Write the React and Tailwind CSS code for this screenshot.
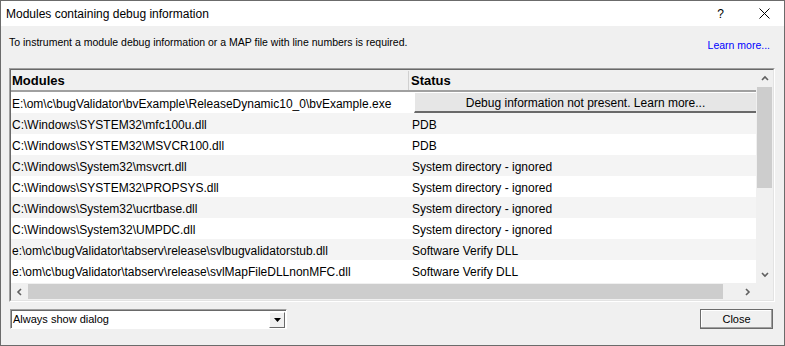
const ROWS = [
  { m: "C:\\Windows\\SYSTEM32\\mfc100u.dll", s: "PDB" },
  { m: "C:\\Windows\\SYSTEM32\\MSVCR100.dll", s: "PDB" },
  { m: "C:\\Windows\\System32\\msvcrt.dll", s: "System directory - ignored" },
  { m: "C:\\Windows\\SYSTEM32\\PROPSYS.dll", s: "System directory - ignored" },
  { m: "C:\\Windows\\System32\\ucrtbase.dll", s: "System directory - ignored" },
  { m: "C:\\Windows\\System32\\UMPDC.dll", s: "System directory - ignored" },
  { m: "e:\\om\\c\\bugValidator\\tabserv\\release\\svlbugvalidatorstub.dll", s: "Software Verify DLL" },
  { m: "e:\\om\\c\\bugValidator\\tabserv\\release\\svlMapFileDLLnonMFC.dll", s: "Software Verify DLL" },
];

const font = { fontFamily: '"Liberation Sans", Arial, sans-serif' };

function Chevron({ dir }) {
  const d = {
    up: "M1 5 L4 2 L7 5",
    down: "M1 2 L4 5 L7 2",
    left: "M5 1 L2 4 L5 7",
    right: "M2 1 L5 4 L2 7",
  }[dir];
  return (
    <svg width="8" height="8" viewBox="0 0 8 8">
      <path d={d} fill="none" stroke="#606060" strokeWidth="1.6" />
    </svg>
  );
}

export default function App() {
  return (
    <div
      className="flex h-[346px] w-[785px] flex-col border border-[#6b6b6b] bg-[#f0f0f0] text-[12px] text-black"
      style={font}
    >
      {/* Title bar */}
      <div className="flex h-[25px] shrink-0 items-center bg-white pl-[5px] pr-[14px]">
        <span className="text-[12px]">Modules containing debug information</span>
        <span className="ml-auto mr-[35px] text-[12px]">?</span>
        <svg width="11" height="11" viewBox="0 0 11 11">
          <path d="M0.5 0.5 L10.5 10.5 M10.5 0.5 L0.5 10.5" stroke="#000" strokeWidth="1" />
        </svg>
      </div>

      {/* Body */}
      <div className="flex flex-1 flex-col px-[8px] pt-[9px]">
        <div className="flex h-[15px] items-center text-[10.5px]">
          <span>To instrument a module debug information or a MAP file with line numbers is required.</span>
          <span className="ml-auto mr-[6px] mt-[6px] text-[#0000ff]">Learn more...</span>
        </div>

        {/* List box */}
        <div className="mt-[18px] mr-[1px] flex h-[234px] flex-col border-l border-t border-r border-b border-l-[#a0a0a0] border-t-[#a0a0a0] border-r-white border-b-white">
          <div className="flex flex-1 flex-col border-l border-t border-r border-b border-l-[#696969] border-t-[#696969] border-r-[#e3e3e3] border-b-[#e3e3e3] bg-white">
            <div className="flex flex-1 overflow-hidden">
              <div className="flex flex-1 flex-col">
                {/* Header */}
                <div className="flex h-[22px] border-b-2 border-[#a0a0a0] bg-[#f0f0f0] pt-[1px] text-[13px] font-bold">
                  <div className="flex w-[398px] items-center border-r border-[#d0d0d0] pl-[1px]">Modules</div>
                  <div className="flex flex-1 items-center pl-[2px]">Status</div>
                </div>
                {/* First row with button */}
                <div className="flex h-[21px] bg-white">
                  <div className="flex w-[403px] items-center pl-[1px] pt-[2px]">
                    E:\om\c\bugValidator\bvExample\ReleaseDynamic10_0\bvExample.exe
                  </div>
                  <div className="flex flex-1 items-center justify-center border-l border-t border-b-2 border-l-white border-t-white border-b-[#696969] bg-[#e6e6e6] pt-[1px]">
                    Debug information not present. Learn more...
                  </div>
                </div>
                {ROWS.map((r, i) => (
                  <div
                    key={r.m}
                    className={"flex h-[21px] items-center pt-[2px] " + (i % 2 === 0 ? "bg-[#f4f4f4]" : "bg-white")}
                  >
                    <div className="w-[400px] pl-[1px]">{r.m}</div>
                    <div className="pl-[1px]">{r.s}</div>
                  </div>
                ))}
              </div>
              {/* Vertical scrollbar */}
              <div className="flex w-[17px] flex-col bg-[#f0f0f0]">
                <div className="flex h-[17px] items-center justify-center">
                  <Chevron dir="up" />
                </div>
                <div className="mx-[1px] h-[101px] bg-[#cdcdcd]" />
                <div className="flex-1" />
                <div className="flex h-[17px] items-center justify-center">
                  <Chevron dir="down" />
                </div>
              </div>
            </div>
            {/* Horizontal scrollbar */}
            <div className="flex h-[17px] items-center bg-[#f0f0f0]">
              <div className="flex w-[17px] items-center justify-center">
                <Chevron dir="left" />
              </div>
              <div className="my-[1px] h-[15px] w-[695px] bg-[#cdcdcd]" />
              <div className="flex-1" />
              <div className="flex w-[17px] items-center justify-center">
                <Chevron dir="right" />
              </div>
              <div className="w-[17px]" />
            </div>
          </div>
        </div>

        {/* Bottom controls */}
        <div className="mt-[7px] flex items-start text-[11px]">
          <div className="ml-[1px] flex h-[20px] w-[277px] border-l border-t border-r border-b border-l-[#a0a0a0] border-t-[#a0a0a0] border-r-white border-b-white">
            <div className="flex flex-1 items-center border-l border-t border-l-[#696969] border-t-[#696969] bg-white pl-[1px]">
              <span className="flex-1">Always show dialog</span>
              <div className="mr-[1px] flex h-[16px] w-[16px] items-center justify-center border-l border-t border-r border-b border-l-white border-t-white border-r-[#696969] border-b-[#696969] bg-[#f0f0f0]">
                <svg width="7" height="4" viewBox="0 0 7 4">
                  <path d="M0 0 L7 0 L3.5 4 Z" fill="#000" />
                </svg>
              </div>
            </div>
          </div>
          <div className="ml-auto mr-[3px] flex h-[20px] w-[73px] items-center justify-center border border-[#6b6b6b] bg-[#f0f0f0] shadow-[inset_-1px_-1px_0_#a0a0a0,inset_1px_1px_0_#ffffff]">
            Close
          </div>
        </div>
      </div>
    </div>
  );
}
